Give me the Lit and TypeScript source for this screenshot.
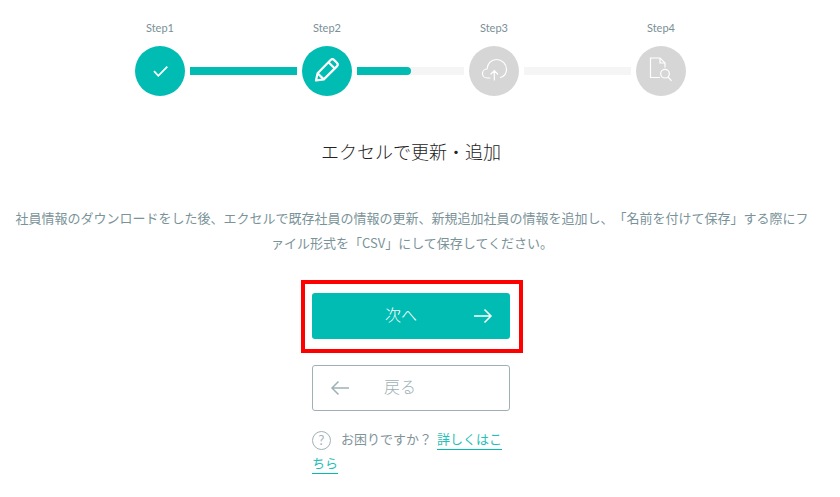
import { LitElement, html, css, svg } from 'lit';
import { customElement } from 'lit/decorators.js';

const icons = [
  svg`<path d="M19 25.200l4.300 4.600 9-9.100" fill="none" stroke="#fff" stroke-width="1.800"/>`,
  svg`<g fill="none" stroke="#fff" stroke-width="2.200" stroke-linejoin="round"><path d="M14 34.500l1.600-7.200 13-13.200c1-1 2.600-1 3.600 0l2.700 2.700c1 1 1 2.600 0 3.600l-13.100 13z"/><path d="M26.500 16.200l6.300 6.300M15.600 27.300l6.200 6.100"/></g>`,
  svg`<g fill="none" stroke="#fff" stroke-width="1.200" stroke-linecap="round"><path d="M21 32h-3c-2.500 0-4.500-2-4.500-4.500s2-4.500 4.500-4.500c.5-5.500 4.300-9.500 9.500-9.500 5.600 0 10 4.300 10 9.700 0 4.300-2.700 7.300-6 8.300"/><path d="M25.300 34v-9M22 28l3.300-3.300 3.300 3.300"/></g>`,
  svg`<g fill="none" stroke="#fff" stroke-width="1.200"><path d="M24 31.500H14.500v-19.500h9.500l5 5v4.500"/><path d="M24 12v5h5"/><circle cx="29" cy="27.700" r="4.300"/><path d="M32 31l3.600 3.800"/></g>`,
];

@customElement('app-root')
export class AppRoot extends LitElement {
  static styles = css`
    :host {
      display: block;
      width: 822px;
      height: 497px;
      overflow: hidden;
      background: #fff;
      font-family: "Noto Sans CJK JP", "Noto Sans", sans-serif;
      font-weight: 300;
      text-spacing-trim: space-all;
    }

    .stepper {
      display: flex;
      justify-content: center;
      padding: 21px 1px 0 0;
    }

    .step {
      display: flex;
      flex-direction: column;
      align-items: center;
      width: 50px;
    }

    .step-label {
      height: 14px;
      margin-bottom: 11px;
      font: 400 11px/14px Lato, sans-serif;
      color: #7a9096;
    }

    .circle {
      width: 50px;
      height: 50px;
      border-radius: 50%;
      background: #d6d6d6;
    }

    .circle.active {
      background: #00bcb2;
    }

    .circle svg {
      display: block;
      width: 50px;
      height: 50px;
    }

    .track {
      width: 107px;
      height: 8px;
      margin: 46px 5px 0;
      background: #f5f5f5;
    }

    .fill {
      height: 100%;
      background: #00bcb2;
    }

    .fill.half {
      width: 54px;
      border-radius: 0 4px 4px 0;
    }

    h1 {
      margin: 42px 0 0;
      font-size: 18px;
      font-weight: 300;
      line-height: 26px;
      color: #222;
      text-align: center;
    }

    .desc {
      margin: 41px 0 0;
      padding: 0 13px 0 15px;
      font-size: 13px;
      font-weight: 400;
      line-height: 25px;
      color: #7a9399;
      text-align: center;
      line-break: loose;
    }

    .actions {
      display: flex;
      flex-direction: column;
      align-items: center;
      margin-top: 25px;
    }

    .highlight {
      border: 4px solid #f00;
      padding: 9px 9px 10px 7px;
      margin-left: 2px;
      width: 198px;
    }

    button {
      display: flex;
      align-items: center;
      box-sizing: border-box;
      width: 198px;
      height: 46px;
      padding: 0;
      border-radius: 3px;
      font: inherit;
      font-size: 16px;
      cursor: pointer;
    }

    button span {
      flex: 1;
      padding-bottom: 5px;
      text-align: center;
    }

    button svg {
      width: 20px;
      height: 16px;
      flex: none;
    }

    .next {
      border: none;
      background: #00bcb2;
      color: #fff;
      padding: 0 17px 0 37px;
    }

    .next span {
      padding-right: 20px;
    }

    .back {
      margin-top: 12px;
      border: 1px solid #9fb1b6;
      background: #fff;
      color: #9fb1b6;
      padding: 0 59px 0 17px;
    }

    .help {
      width: 198px;
      margin-top: 16px;
      font-size: 13px;
      font-weight: 400;
      line-height: 24px;
      color: #80949a;
    }

    .q {
      display: inline-block;
      box-sizing: border-box;
      width: 19px;
      height: 19px;
      margin-right: 10px;
      border: 1.500px solid #9fb1b6;
      border-radius: 50%;
      font: 400 13px/16px Lato, sans-serif;
      color: #9fb1b6;
      text-align: center;
      vertical-align: -1px;
    }

    a {
      margin-left: 5px;
      color: #1fc1b8;
      text-decoration: none;
      border-bottom: 1px solid #00bcb2;
      padding-bottom: 1px;
    }
  `;

  renderStep(n: number, active: boolean) {
    return html`
      <div class="step">
        <div class="step-label">Step${n + 1}</div>
        <div class="circle ${active ? 'active' : ''}">
          <svg viewBox="0 0 50 50">${icons[n]}</svg>
        </div>
      </div>
    `;
  }

  render() {
    return html`
      <div class="stepper">
        ${this.renderStep(0, true)}
        <div class="track"><div class="fill"></div></div>
        ${this.renderStep(1, true)}
        <div class="track"><div class="fill half"></div></div>
        ${this.renderStep(2, false)}
        <div class="track"></div>
        ${this.renderStep(3, false)}
      </div>

      <h1>エクセルで更新・追加</h1>
      <p class="desc">社員情報のダウンロードをした後、エクセルで既存社員の情報の更新、新規追加社員の情報を追加し、「名前を付けて保存」する際にファイル形式を「CSV」にして保存してください。</p>

      <div class="actions">
        <div class="highlight">
          <button class="next">
            <span>次へ</span>
            <svg viewBox="0 0 20 16" fill="none" stroke="#fff" stroke-width="1.500"><path d="M1 8h17M11.500 1.500L18 8l-6.500 6.500"/></svg>
          </button>
        </div>
        <button class="back">
          <svg viewBox="0 0 20 16" fill="none" stroke="#9fb1b6" stroke-width="1.500"><path d="M19 8H2M8.500 1.500L2 8l6.500 6.500"/></svg>
          <span>戻る</span>
        </button>
        <div class="help"><span class="q">?</span>お困りですか？<a href="#">詳しくはこちら</a></div>
      </div>
    `;
  }
}
